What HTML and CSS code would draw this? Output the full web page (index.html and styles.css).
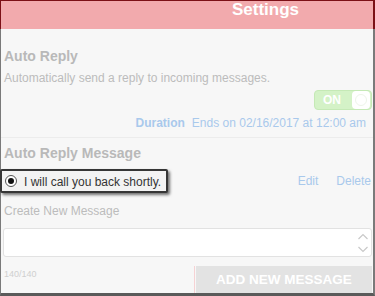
FILE: index.html
```html
<!DOCTYPE html>
<html>
<head>
<meta charset="utf-8">
<link rel="stylesheet" href="styles.css">
</head>
<body>
<div class="frame">
  <header class="header"><span class="header-title">Settings</span></header>
  <main class="main">
    <h2 class="section-title first">Auto Reply</h2>
    <p class="desc">Automatically send a reply to incoming messages.</p>
    <div class="toggle-row">
      <div class="toggle">
        <span class="toggle-label">ON</span>
        <span class="toggle-knob"><span class="knob-ring"></span></span>
      </div>
    </div>
    <div class="duration"><span class="duration-label">Duration</span><span class="duration-value">Ends on 02/16/2017 at 12:00 am</span></div>
    <div class="separator"></div>
    <h2 class="section-title second">Auto Reply Message</h2>
    <div class="message-row">
      <div class="message-box">
        <span class="radio"><span class="radio-dot"></span></span>
        <span class="message-text">I will call you back shortly.</span>
      </div>
      <div class="message-actions">
        <span class="action">Edit</span>
        <span class="action">Delete</span>
      </div>
    </div>
    <div class="create-label">Create New Message</div>
    <div class="textarea">
      <svg class="spin" width="12" height="24" viewBox="0 0 12 24">
        <polyline points="1.5,8 6,3.5 10.5,8" fill="none" stroke="#c9c9c9" stroke-width="1.2"/>
        <polyline points="1.5,16 6,20.5 10.5,16" fill="none" stroke="#c9c9c9" stroke-width="1.2"/>
      </svg>
    </div>
    <div class="bottom-row">
      <span class="counter">140/140</span>
      <div class="button-wrap"><div class="add-button">ADD NEW MESSAGE</div></div>
    </div>
  </main>
</div>
</body>
</html>
```

FILE: styles.css
```css
* { box-sizing: border-box; }
html, body { margin: 0; padding: 0; }
body {
  width: 375px;
  height: 296px;
  overflow: hidden;
  font-family: "Liberation Sans", Arial, sans-serif;
  background: #f7f7f7;
}
.frame {
  width: 375px;
  height: 296px;
  display: flex;
  flex-direction: column;
}
.header {
  height: 29px;
  flex: none;
  background: #f2aaad;
  border-top: 1px solid #7c1016;
  border-left: 1px solid #7c1016;
  border-right: 2px solid #7c1016;
  padding-left: 231px;
  line-height: 17px;
  font-size: 17px;
  font-weight: bold;
  color: #ffffff;
}
.main {
  flex: 1;
  background: #f7f7f7;
  border-left: 1px solid #7a7a7a;
  border-right: 2px solid #7a7a7a;
  border-bottom: 3px solid #5a5a5a;
  padding: 0 1px 0 3px;
}
.section-title {
  margin: 0;
  font-size: 14px;
  line-height: 16px;
  font-weight: bold;
  color: #b9b9b9;
}
.section-title.first { margin-top: 19px; }
.section-title.second { margin-top: 7px; }
.desc {
  margin: 7px 0 0;
  font-size: 12px;
  line-height: 14px;
  color: #bcbcbc;
}
.toggle-row {
  margin-top: 5px;
  display: flex;
  justify-content: flex-end;
}
.toggle {
  width: 58px;
  height: 20px;
  background: #d4f2c7;
  border: 1px solid #c5e9b6;
  border-radius: 4px;
  display: flex;
  align-items: center;
  padding: 0 1px 0 8px;
}
.toggle-label {
  font-size: 12px;
  font-weight: bold;
  color: #ffffff;
  flex: 1;
}
.toggle-knob {
  width: 18px;
  height: 18px;
  background: #ffffff;
  border-radius: 4px;
  display: flex;
  align-items: center;
  justify-content: center;
}
.knob-ring {
  width: 12px;
  height: 12px;
  border-radius: 50%;
  border: 1px solid #eef5ea;
}
.duration {
  margin-top: 6px;
  display: flex;
  justify-content: flex-end;
  gap: 7px;
  padding-right: 6px;
  font-size: 12px;
  line-height: 14px;
  color: #a9c9ec;
}
.duration-label { font-weight: bold; }
.separator {
  margin: 7px -1px 0 -3px;
  height: 1px;
  background: #ececec;
}
.message-row {
  margin-top: 8px;
  display: flex;
  align-items: center;
  justify-content: space-between;
}
.message-box {
  margin-left: -4px;
  width: 168px;
  height: 24px;
  background: #f3f3f3;
  border: 2px solid #363636;
  border-radius: 2px;
  box-shadow: 2px 2px 3px rgba(0, 0, 0, 0.55);
  display: flex;
  align-items: center;
  padding-left: 3px;
  gap: 7px;
}
.radio {
  width: 12px;
  height: 12px;
  border-radius: 50%;
  border: 1px solid #555555;
  background: #ffffff;
  display: flex;
  align-items: center;
  justify-content: center;
}
.radio-dot {
  width: 6px;
  height: 6px;
  border-radius: 50%;
  background: #111111;
}
.message-text {
  font-size: 12px;
  line-height: 14px;
  color: #333333;
  padding-top: 1px;
}
.message-actions {
  display: flex;
  gap: 18px;
  padding-right: 1px;
  font-size: 12px;
  line-height: 14px;
  color: #a9c9ec;
}
.create-label {
  margin-top: 11px;
  font-size: 12px;
  line-height: 14px;
  color: #bcbcbc;
}
.textarea {
  margin-top: 10px;
  margin-left: -1px;
  height: 29px;
  background: #ffffff;
  border: 1px solid #e2e2e2;
  border-radius: 3px;
  display: flex;
  align-items: center;
  justify-content: flex-end;
  padding-right: 2px;
}
.bottom-row {
  margin-top: 9px;
  display: flex;
  justify-content: space-between;
  align-items: flex-start;
}
.counter {
  margin-top: 3px;
  font-size: 9px;
  line-height: 11px;
  color: #cfcfcf;
}
.button-wrap {
  border-left: 1px solid #f6d2d4;
  padding-left: 1px;
}
.add-button {
  width: 176px;
  height: 27px;
  background: #e3e3e3;
  color: #ffffff;
  font-size: 13.5px;
  font-weight: bold;
  line-height: 27px;
  text-align: center;
}
```
